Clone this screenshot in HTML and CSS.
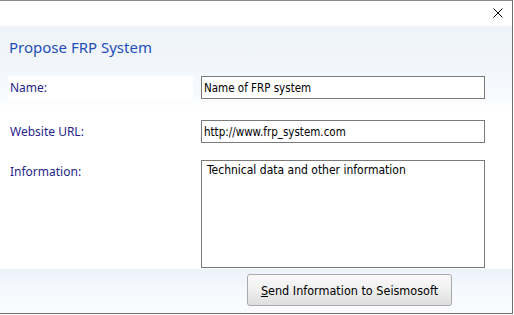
FILE: index.html
```html
<!DOCTYPE html>
<html lang="en">
<head>
  <meta charset="UTF-8" />
  <title>Propose FRP System</title>
  <link rel="stylesheet" href="styles.css">
</head>
<body>
  <div class="window">
    <!-- Title bar -->
    <div class="titlebar">
      <button class="close-btn" title="Close">
        <svg width="10" height="10" viewBox="0 0 10 10">
          <path d="M0.5 0.5 L9.5 9.5 M9.5 0.5 L0.5 9.5" stroke="#000" stroke-width="1" fill="none" />
        </svg>
      </button>
    </div>

    <!-- Form body -->
    <div class="dialog-body">
      <h2 class="dialog-title">Propose FRP System</h2>

      <div class="row row-name">
        <label class="field-label label-boxed" for="frpName">Name:</label>
        <input type="text" id="frpName" class="field-input" value="Name of FRP system" />
      </div>

      <div class="row row-url">
        <label class="field-label" for="frpUrl">Website URL:</label>
        <input type="text" id="frpUrl" class="field-input" value="http://www.frp_system.com" />
      </div>

      <div class="row row-info">
        <label class="field-label" for="frpInfo">Information:</label>
        <textarea id="frpInfo" class="field-area">Technical data and other information</textarea>
      </div>
    </div>

    <!-- Footer with send button -->
    <div class="dialog-footer">
      <button class="send-btn"><u>S</u>end Information to Seismosoft</button>
    </div>
  </div>
</body>
</html>
```

FILE: styles.css
```css
/* Base */
body {
  margin: 0;
  background: #ffffff;
  font-family: 'Noto Sans', 'Open Sans', sans-serif;
}
.window {
  width: 512px;
  height: 312px;
  border-top: 1px solid #8c8c8c;
  border-right: 1px solid #6f6f6f;
  border-bottom: 1px solid #6f6f6f;
  background: #ffffff;
  display: flex;
  flex-direction: column;
}

/* Title bar */
.titlebar {
  height: 25px;
  display: flex;
  justify-content: flex-end;
  align-items: flex-start;
  background: #ffffff;
}
.close-btn {
  border: none;
  background: transparent;
  padding: 0;
  margin: 7px 9px 0 0;
  width: 10px;
  height: 10px;
  display: flex;
}

/* Body */
.dialog-body {
  flex: 1;
  padding-left: 8px;
  background: linear-gradient(to bottom, #eef3fa 0, #f3f7fc 45px, #f8fafd 70px, #ffffff 82px);
}
.dialog-title {
  margin: 0;
  height: 50px;
  padding-left: 1px;
  font-size: 15px;
  font-weight: normal;
  line-height: 43px;
  color: #1d4fb8;
  box-sizing: border-box;
}
.row {
  display: flex;
  align-items: flex-start;
}
.row-url {
  margin-top: 19px;
}
.row-info {
  margin-top: 15px;
}
.field-label {
  width: 185px;
  height: 25px;
  line-height: 23px;
  padding-left: 2px;
  box-sizing: border-box;
  font-size: 12px;
  color: #27248c;
}
.label-boxed {
  background: #ffffff;
}
.field-input,
.field-area {
  margin: 0 0 0 8px;
  width: 284px;
  border: 1px solid #7a7a7a;
  border-radius: 0;
  box-sizing: border-box;
  font-family: 'DejaVu Sans Condensed', 'DejaVu Sans', sans-serif;
  color: #000;
  background: #fff;
  outline: none;
}
.field-input {
  height: 23px;
  padding: 0 2px;
  font-size: 11.5px;
}
.field-area {
  height: 108px;
  padding: 2px 5px;
  font-size: 12px;
  resize: none;
  overflow: hidden;
}

/* Footer */
.dialog-footer {
  height: 44px;
  padding: 5px 0 0 247px;
  box-sizing: border-box;
  background: linear-gradient(to bottom, #edf2fb 0, #f5f8fd 20px, #fbfcfe 44px);
}
.send-btn {
  width: 205px;
  height: 32px;
  border: 1px solid #a9a9a9;
  border-radius: 3px;
  background: linear-gradient(to bottom, #fafafa 0, #efefef 50%, #dedede 100%);
  font-family: 'DejaVu Sans Condensed', 'DejaVu Sans', sans-serif;
  font-size: 12.5px;
  color: #000;
  padding: 0;
}
```
